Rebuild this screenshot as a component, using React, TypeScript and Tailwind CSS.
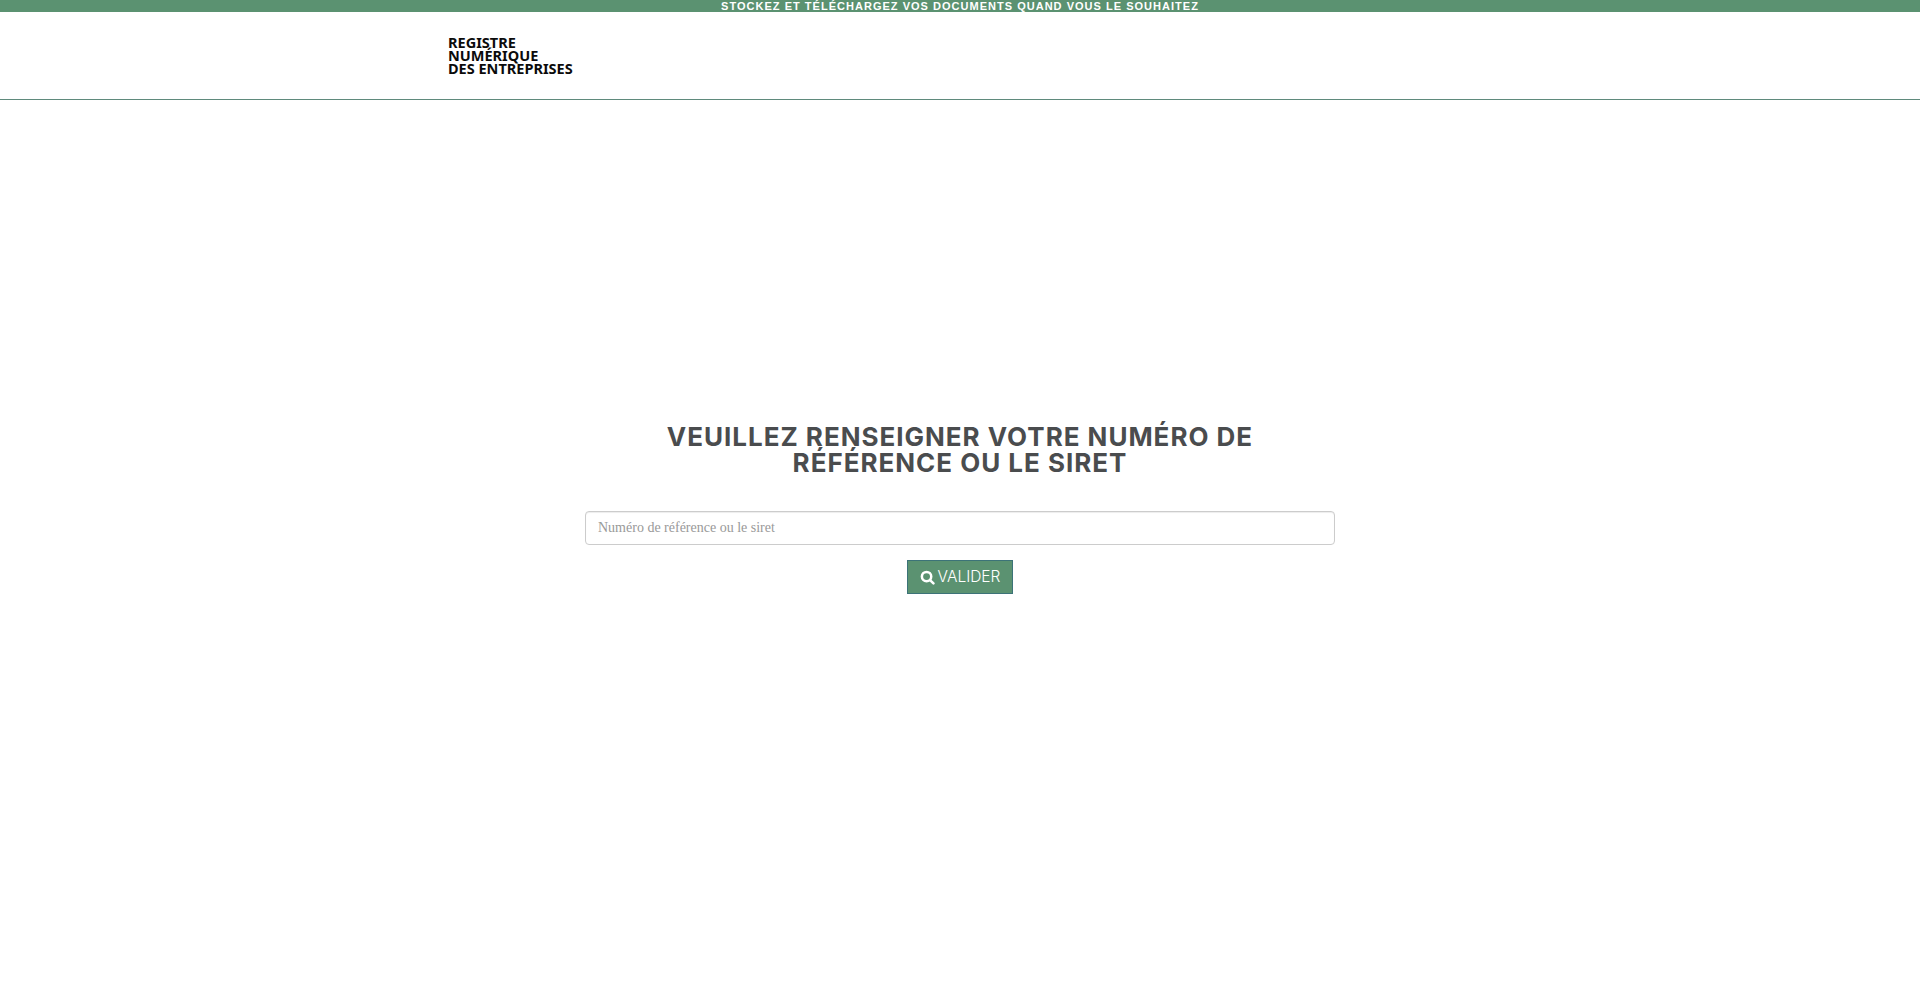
export default function App() {
  return (
    <div className="min-h-[993px] bg-white">
      <div className="h-3 bg-[#5b9271] flex items-center justify-center">
        <span className="text-[11px] leading-3 font-bold tracking-[1.02px] text-white font-['Liberation_Sans',sans-serif] whitespace-nowrap">
          STOCKEZ ET TÉLÉCHARGEZ VOS DOCUMENTS QUAND VOUS LE SOUHAITEZ
        </span>
      </div>
      <header className="h-[88px] border-b border-[#5f8a7c] pl-[448px] pt-[23px]">
        <div className="font-['Noto_Sans',sans-serif] font-bold text-[14.5px] leading-[13px] text-[#0b0b0b] pt-[1px]">
          <div>REGISTRE</div>
          <div>NUMÉRIQUE</div>
          <div>DES ENTREPRISES</div>
        </div>
      </header>
      <main className="flex flex-col items-center pt-[324px]">
        <h1 className="w-[750px] text-center font-['Inter',sans-serif] font-bold text-[26px] leading-[26px] tracking-[0.98px] text-[#4a4c4e] px-[70px]">
          VEUILLEZ RENSEIGNER VOTRE NUMÉRO DE RÉFÉRENCE OU LE SIRET
        </h1>
        <input
          placeholder="Numéro de référence ou le siret"
          className="mt-[35px] w-[750px] h-[34px] rounded border border-[#ccc] px-3 text-sm font-['Liberation_Serif',serif] placeholder:text-[#999] shadow-[inset_0_1px_1px_rgba(0,0,0,0.075)] outline-none"
        />
        <button className="mt-[15px] w-[106px] h-[34px] border border-[#3c7378] bg-[#5b9271] text-white flex items-center justify-center gap-[3px] font-['Inter',sans-serif] font-light text-[15.5px]">
          <svg viewBox="0 0 24 24" className="w-[15px] h-[15px]" fill="none" stroke="currentColor" strokeWidth="4" strokeLinecap="round">
            <circle cx="10.5" cy="10.5" r="7.5" />
            <path d="M16.5 16.5L21.5 21.5" />
          </svg>
          VALIDER
        </button>
      </main>
    </div>
  );
}
